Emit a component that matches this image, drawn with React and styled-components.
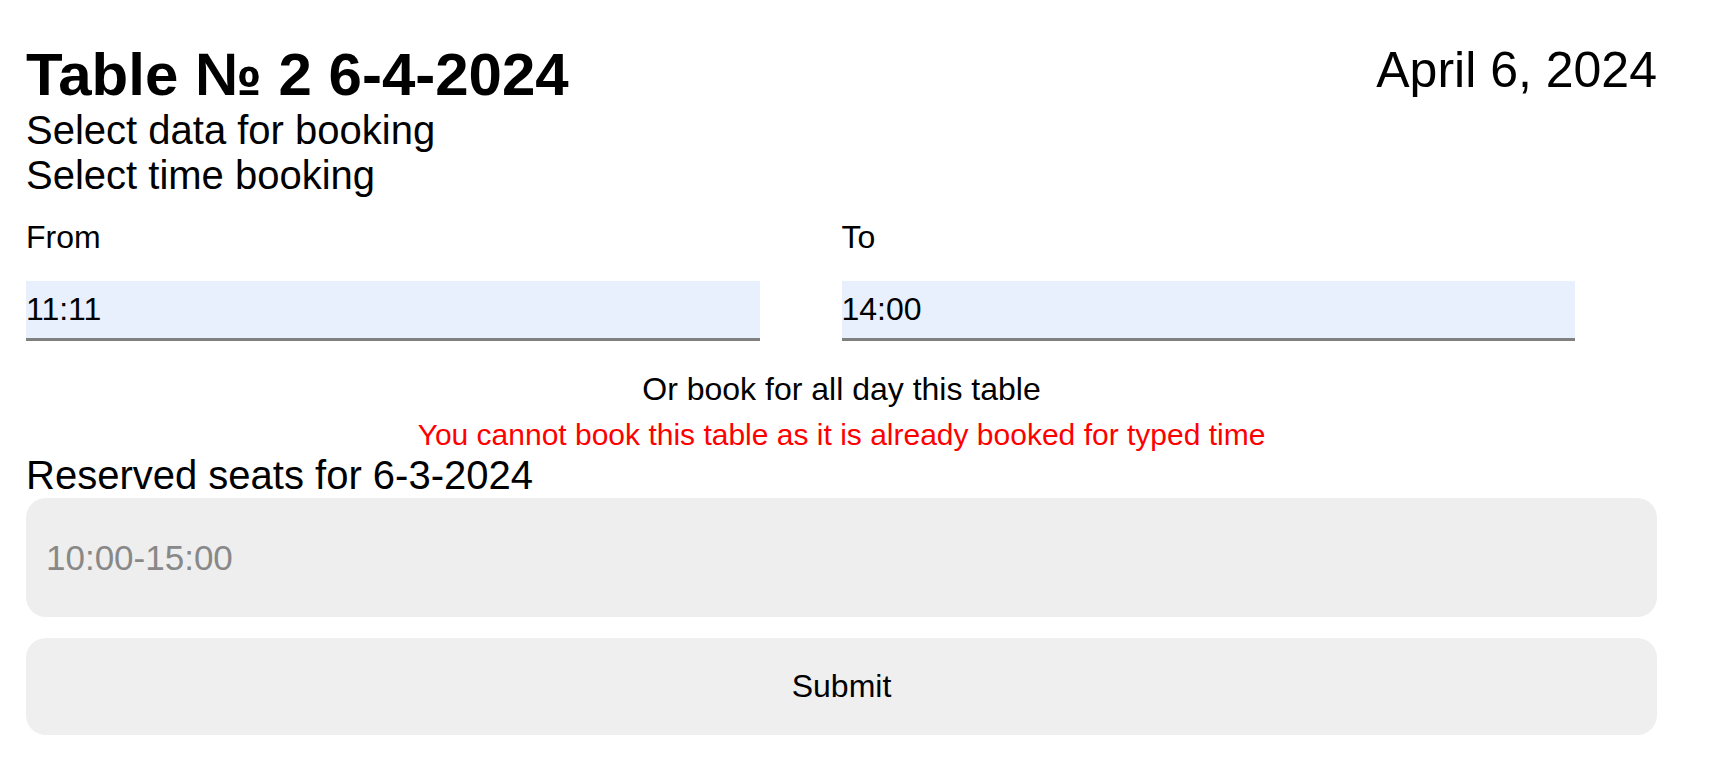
import React from 'react';
import styled, { createGlobalStyle } from 'styled-components';

const GlobalStyle = createGlobalStyle`
  html {
    overflow-y: scroll;
  }

  body {
    margin: 0;
    background: #fff;
    color: #000;
    font-family: 'Liberation Sans', Arial, sans-serif;
  }

  ::-webkit-scrollbar {
    width: 12px;
  }

  ::-webkit-scrollbar-track {
    background: #f1f1f1;
  }
`;

const Page = styled.div`
  width: 1631px;
  margin-left: 26px;
  padding: 42px 0 40px 0;
`;

const Header = styled.header`
  display: flex;
  justify-content: space-between;
  align-items: flex-start;
`;

const Title = styled.h1`
  margin: 0;
  font-size: 60px;
  line-height: 66px;
  font-weight: 700;
`;

const DateText = styled.div`
  font-size: 50px;
  line-height: 56px;
`;

const Subtitle = styled.p`
  margin: 0;
  font-size: 40px;
  line-height: 45px;
`;

const TimeGrid = styled.div`
  display: grid;
  grid-template-columns: 1fr 1fr;
  margin-top: 21px;
`;

const Field = styled.label`
  display: flex;
  flex-direction: column;
`;

const FieldLabel = styled.span`
  font-size: 32px;
  line-height: 36px;
`;

const TimeInput = styled.input`
  box-sizing: border-box;
  width: 90%;
  height: 60px;
  margin-top: 26px;
  padding: 0;
  border: none;
  border-bottom: 3px solid #808080;
  background: #e8f0fe;
  color: #000;
  font-family: inherit;
  font-size: 32px;
  outline: none;
`;

const AllDay = styled.div`
  margin-top: 30px;
  text-align: center;
  font-size: 32px;
  line-height: 37px;
`;

const ErrorText = styled.div`
  margin-top: 10px;
  text-align: center;
  color: #ff0000;
  font-size: 30px;
  line-height: 34px;
`;

const SectionTitle = styled.h2`
  margin: 1px 0 0 0;
  font-size: 40px;
  line-height: 45px;
  font-weight: 400;
`;

const ReservedBox = styled.div`
  box-sizing: border-box;
  display: flex;
  align-items: center;
  height: 119px;
  padding: 0 20px;
  border-radius: 20px;
  background: #eeeeee;
`;

const ReservedItem = styled.span`
  color: #888888;
  font-size: 35px;
  line-height: 40px;
`;

const SubmitButton = styled.button`
  display: block;
  width: 100%;
  height: 97px;
  margin-top: 21px;
  border: none;
  border-radius: 20px;
  background: #efefef;
  color: #000;
  font-family: inherit;
  font-size: 32px;
  cursor: pointer;
`;

const booking = {
  table: 2,
  date: '6-4-2024',
  longDate: 'April 6, 2024',
  from: '11:11',
  to: '14:00',
  reservedDate: '6-3-2024',
  reserved: ['10:00-15:00'],
};

export default function App() {
  return (
    <>
      <GlobalStyle />
      <Page>
        <Header>
          <Title>
            Table № {booking.table} {booking.date}
          </Title>
          <DateText>{booking.longDate}</DateText>
        </Header>
        <Subtitle>Select data for booking</Subtitle>
        <Subtitle>Select time booking</Subtitle>
        <TimeGrid>
          <Field>
            <FieldLabel>From</FieldLabel>
            <TimeInput type="text" defaultValue={booking.from} />
          </Field>
          <Field>
            <FieldLabel>To</FieldLabel>
            <TimeInput type="text" defaultValue={booking.to} />
          </Field>
        </TimeGrid>
        <AllDay>Or book for all day this table</AllDay>
        <ErrorText>
          You cannot book this table as it is already booked for typed time
        </ErrorText>
        <SectionTitle>Reserved seats for {booking.reservedDate}</SectionTitle>
        <ReservedBox>
          {booking.reserved.map((slot) => (
            <ReservedItem key={slot}>{slot}</ReservedItem>
          ))}
        </ReservedBox>
        <SubmitButton type="button">Submit</SubmitButton>
      </Page>
    </>
  );
}
